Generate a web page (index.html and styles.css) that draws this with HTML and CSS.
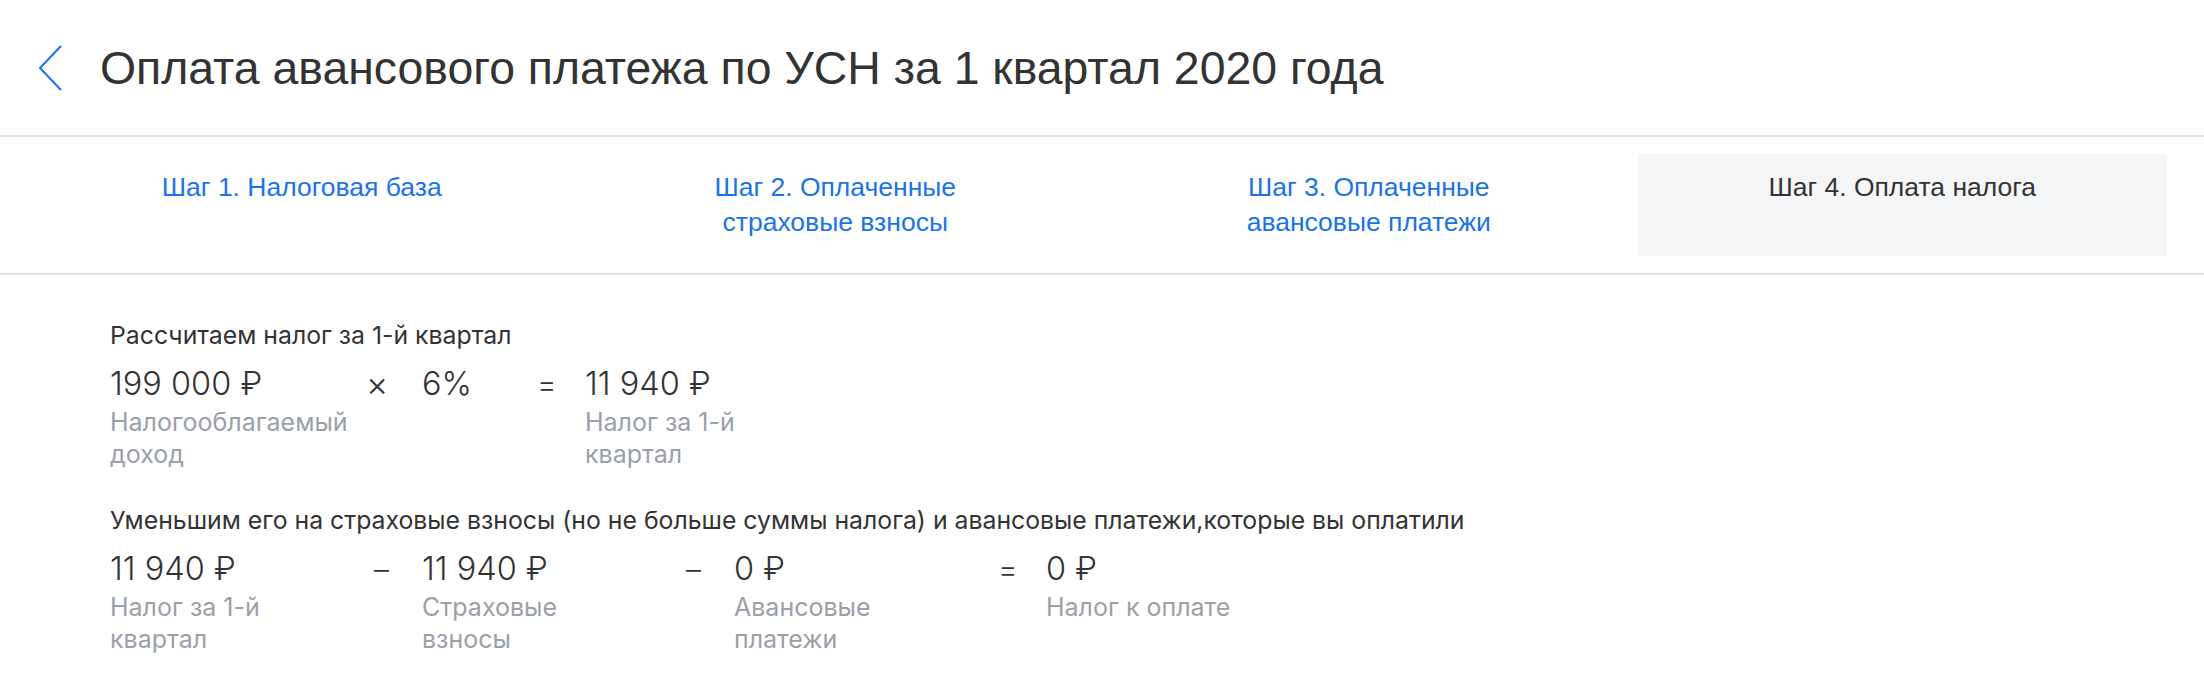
FILE: index.html
```html
<html>
<head>
    <meta charset="UTF-8">
    <meta name="viewport" content="width=device-width, initial-scale=1.0">
    <title>Оплата авансового платежа</title>
    <link rel="stylesheet" href="styles.css">
</head>

<body>
    <div class="header">
        <a class="back" href="#">
            <svg width="26" height="48" viewBox="0 0 26 48"><path d="M24 2 L3 24 L24 46" fill="none" stroke="#1a73e8" stroke-width="2"/></svg>
        </a>
        <h1>Оплата авансового платежа по УСН за 1 квартал 2020 года</h1>
    </div>
    <div class="steps">
        <a class="step" href="#">Шаг 1. Налоговая база</a>
        <a class="step" href="#">Шаг 2. Оплаченные<br>страховые взносы</a>
        <a class="step" href="#">Шаг 3. Оплаченные<br>авансовые платежи</a>
        <div class="step active">Шаг 4. Оплата налога</div>
    </div>
    <div class="content">
        <div class="calc">
            <p class="caption">Рассчитаем налог за 1-й квартал</p>
            <div class="formula">
                <div class="term">
                    <div class="value">199 000 ₽</div>
                    <div class="label">Налогооблагаемый доход</div>
                </div>
                <div class="op times">×</div>
                <div class="term short">
                    <div class="value">6%</div>
                </div>
                <div class="op">=</div>
                <div class="term">
                    <div class="value">11 940 ₽</div>
                    <div class="label">Налог за 1-й квартал</div>
                </div>
            </div>
        </div>
        <div class="calc">
            <p class="caption">Уменьшим его на страховые взносы (но не больше суммы налога) и авансовые платежи,которые вы оплатили</p>
            <div class="formula">
                <div class="term">
                    <div class="value">11 940 ₽</div>
                    <div class="label">Налог за 1-й квартал</div>
                </div>
                <div class="op">–</div>
                <div class="term">
                    <div class="value">11 940 ₽</div>
                    <div class="label">Страховые взносы</div>
                </div>
                <div class="op">–</div>
                <div class="term">
                    <div class="value">0 ₽</div>
                    <div class="label">Авансовые платежи</div>
                </div>
                <div class="op">=</div>
                <div class="term">
                    <div class="value">0 ₽</div>
                    <div class="label">Налог к оплате</div>
                </div>
            </div>
        </div>
    </div>
</body>
</html>
```

FILE: styles.css
```css
body {
    margin: 0;
    background: white;
    color: #333;
    font-family: Inter, "Noto Sans", sans-serif;
}
.header {
    display: flex;
    align-items: center;
    height: 135px;
    padding-left: 37px;
    gap: 37px;
    border-bottom: 2px solid #e0e0e0;
}
.back {
    display: flex;
}
h1 {
    margin: 0;
    font-family: "Liberation Sans", Arial, sans-serif;
    font-weight: normal;
    font-size: 46.4px;
    color: #333;
}
.steps {
    display: grid;
    grid-template-columns: repeat(4, 1fr);
    gap: 4px;
    padding: 17px 37px;
    border-bottom: 2px solid #e0e0e0;
}
.step {
    padding: 16px;
    min-height: 68px;
    text-align: center;
    font-family: "Liberation Sans", Arial, sans-serif;
    font-size: 26.5px;
    line-height: 35px;
    color: #1a73e8;
    text-decoration: none;
}
.step.active {
    background: #f5f6f8;
    color: #333;
}
.content {
    padding: 44px 110px 0;
}
.calc + .calc {
    margin-top: 34px;
}
.caption {
    margin: 0 0 13px;
    font-size: 24.8px;
    line-height: 32px;
    color: #333;
}
.formula {
    display: flex;
    align-items: flex-start;
}
.term {
    width: 264px;
}
.term.short {
    width: 115px;
}
.value {
    font-size: 32.5px;
    line-height: 40px;
    font-weight: 300;
    margin-bottom: 2px;
}
.label {
    max-width: 210px;
    font-size: 25px;
    line-height: 32px;
    color: #9aa0a8;
}
.op {
    width: 48px;
    font-size: 30px;
    line-height: 40px;
    font-weight: 300;
}
.op.times {
    margin-left: -8px;
    width: 56px;
    font-size: 34px;
}
```
